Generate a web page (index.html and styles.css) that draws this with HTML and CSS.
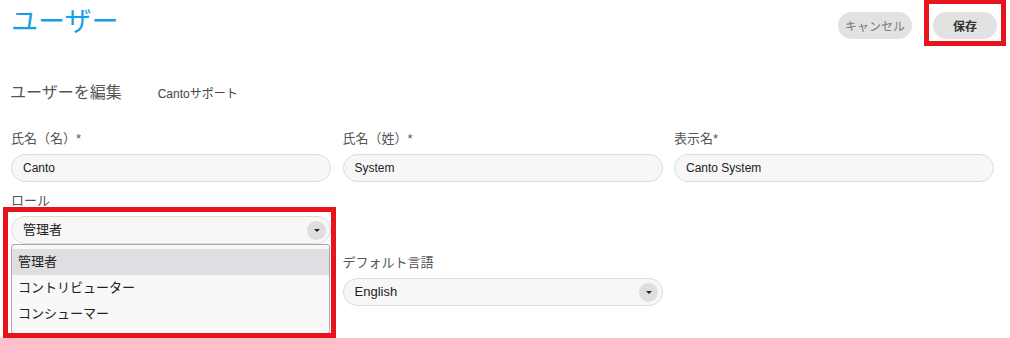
FILE: index.html
```html
<!DOCTYPE html>
<html lang="ja">
<head>
    <meta charset="UTF-8">
    <title>ユーザー</title>
    <link rel="stylesheet" href="styles.css">
</head>
<body>
    <div class="page">
        <div class="header">
            <h1>ユーザー</h1>
            <div class="actions">
                <button class="btn cancel">キャンセル</button>
                <button class="btn save">保存</button>
            </div>
        </div>

        <div class="subhead">
            <h2>ユーザーを編集</h2>
            <span class="who">Cantoサポート</span>
        </div>

        <div class="form">
            <div class="field">
                <label>氏名（名）*</label>
                <div class="input">Canto</div>
            </div>
            <div class="field">
                <label>氏名（姓）*</label>
                <div class="input">System</div>
            </div>
            <div class="field">
                <label>表示名*</label>
                <div class="input">Canto System</div>
            </div>

            <div class="field role">
                <label>ロール</label>
                <div class="input select">管理者<span class="arrow"></span></div>
                <ul class="options">
                    <li class="active">管理者</li>
                    <li>コントリビューター</li>
                    <li>コンシューマー</li>
                </ul>
            </div>
            <div class="field"></div>
            <div class="field"></div>

            <div class="field"></div>
            <div class="field">
                <label>デフォルト言語</label>
                <div class="input select">English<span class="arrow"></span></div>
            </div>
        </div>
    </div>

    <!-- annotation boxes -->
    <div class="mark mark-save"></div>
    <div class="mark mark-role"></div>
</body>
</html>
```

FILE: styles.css
```css
body {
    margin: 0;
    font-family: "Liberation Sans", "Noto Sans CJK JP", sans-serif;
    color: #333;
    background: #fff;
}
.page {
    position: relative;
    width: 1010px;
    height: 338px;
    overflow: hidden;
}
.header {
    display: flex;
    justify-content: space-between;
    align-items: flex-start;
    padding: 0 13px 0 11px;
}
h1 {
    margin: 5px 0 0;
    font-size: 27px;
    font-weight: normal;
    color: #159fe6;
    line-height: 34px;
}
.actions {
    display: flex;
    gap: 21px;
    margin-top: 12px;
}
.btn {
    height: 27px;
    border: none;
    border-radius: 14px;
    background-color: #e2e2e2;
    font-family: inherit;
    font-size: 12px;
    padding: 0;
}
.cancel {
    width: 74px;
    color: #7a7a7a;
}
.save {
    width: 64px;
    color: #333;
    font-weight: bold;
}
.subhead {
    display: flex;
    align-items: baseline;
    gap: 36px;
    padding-left: 10px;
    margin-top: 40px;
}
h2 {
    margin: 0;
    font-size: 16px;
    font-weight: normal;
    color: #555;
}
.who {
    font-size: 12px;
    color: #444;
}
.form {
    display: grid;
    grid-template-columns: 320px 320px 320px;
    column-gap: 11.5px;
    row-gap: 10px;
    padding-left: 11px;
    margin-top: 27px;
}
.field {
    position: relative;
    min-height: 52px;
}
label {
    display: block;
    font-size: 13px;
    line-height: 18px;
    color: #555;
    margin-bottom: 6px;
}
.input {
    position: relative;
    height: 26px;
    line-height: 26px;
    border: 1px solid #dcdcdc;
    border-radius: 14px;
    background: #f7f7f7;
    padding-left: 11px;
    font-size: 12px;
    color: #222;
}
.select {
    font-size: 13px;
}
.arrow {
    position: absolute;
    right: 4px;
    top: 4px;
    width: 19px;
    height: 19px;
    border-radius: 50%;
    background: #dedede;
}
.arrow::after {
    content: "";
    position: absolute;
    left: 7px;
    top: 8px;
    border-left: 3px solid transparent;
    border-right: 3px solid transparent;
    border-top: 3px solid #222;
}
.options {
    position: absolute;
    left: 0;
    top: 52px;
    width: 317px;
    margin: 0;
    padding: 4px 0 6px;
    list-style: none;
    background: #f8f8f8;
    border: 1px solid #a8a8a8;
    border-radius: 3px;
    z-index: 2;
}
.options li {
    height: 26px;
    line-height: 26px;
    padding-left: 6px;
    font-size: 13px;
    color: #222;
}
.options li.active {
    background: #dfdee3;
}
.mark {
    position: absolute;
    border: 5px solid #e8141c;
    z-index: 5;
}
.mark-save {
    left: 924px;
    top: -1px;
    width: 72px;
    height: 37px;
}
.mark-role {
    left: 3px;
    top: 207px;
    width: 323px;
    height: 121px;
}
```
